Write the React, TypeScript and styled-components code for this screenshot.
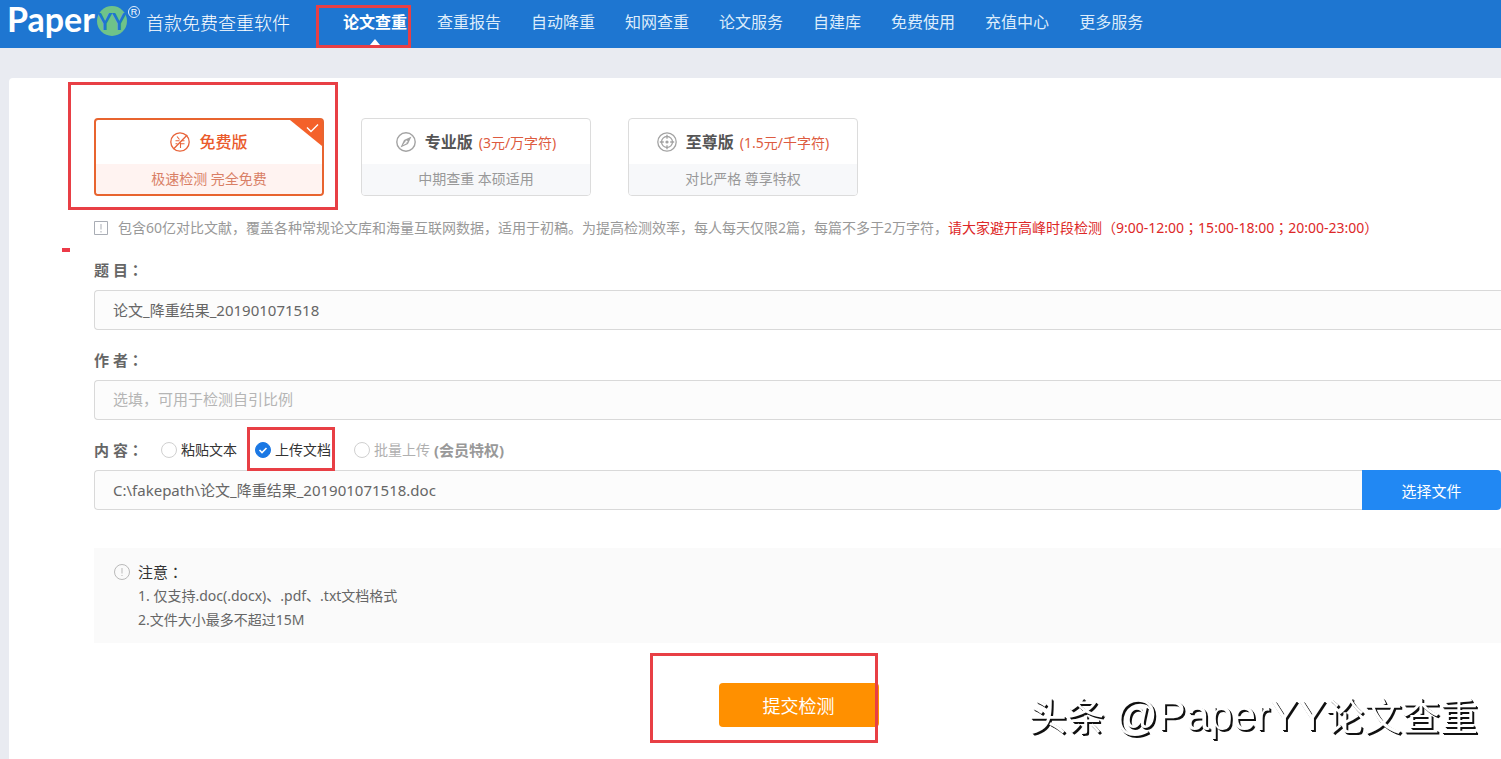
import React from 'react';
import styled, { createGlobalStyle, css } from 'styled-components';

const Global = createGlobalStyle`
  *, *::before, *::after { box-sizing: border-box; }
  body {
    margin: 0;
    background: #e9ebf1;
    font-family: "Noto Sans", "Noto Sans CJK SC", sans-serif;
    font-size: 14px;
    color: #666;
    overflow-x: hidden;
  }
  button, input { font: inherit; }
`;

const Header = styled.header`
  display: flex;
  height: 48px;
  padding-left: 4px;
  background: #1e76d1;
  color: #fff;
`;

const Brand = styled.a`
  display: flex;
  align-items: flex-start;
  width: 324px;
  flex: none;
  color: #fff;
  text-decoration: none;
`;

const Slogan = styled.span`
  font-family: "Noto Sans CJK SC", sans-serif;
  font-weight: 300;
  font-size: 18px;
  line-height: 44px;
  white-space: nowrap;
`;

const Nav = styled.nav`
  display: flex;
`;

const NavLink = styled.a<{ $active?: boolean }>`
  position: relative;
  padding: 0 15px;
  font-size: 16px;
  line-height: 44px;
  white-space: nowrap;
  text-decoration: none;
  color: ${(p) => (p.$active ? '#fff' : '#dcecfb')};
  font-weight: ${(p) => (p.$active ? 700 : 400)};
  ${(p) =>
    p.$active &&
    css`
      &::after {
        content: '';
        position: absolute;
        left: 42px;
        bottom: 3px;
        border: 5px solid transparent;
        border-top: 0;
        border-bottom: 6px solid #fff;
      }
    `}
`;

const Mark = styled.span<{ $t: number; $r: number; $b: number; $l: number }>`
  position: absolute;
  z-index: 2;
  top: ${(p) => p.$t}px;
  right: ${(p) => p.$r}px;
  bottom: ${(p) => p.$b}px;
  left: ${(p) => p.$l}px;
  border: 3px solid #e83f45;
  pointer-events: none;
`;

const Dash = styled.span`
  position: absolute;
  left: -32px;
  top: 30px;
  width: 8px;
  height: 4px;
  background: #ec3a48;
`;

const Panel = styled.main`
  margin: 30px 0 0 9px;
  padding: 40px 0 32px 85px;
  min-height: calc(100vh - 78px);
  background: #fff;
  border-radius: 4px 0 0 0;
`;

const Plans = styled.div`
  display: flex;
  gap: 37px;
`;

const Plan = styled.button<{ $active?: boolean }>`
  position: relative;
  display: flex;
  flex-direction: column;
  width: 230px;
  height: 78px;
  padding: 0;
  border: ${(p) => (p.$active ? '2px solid #e8642f' : '1px solid #dcdcdc')};
  border-radius: 4px;
  background: #fff;
  cursor: pointer;
`;

const PlanTop = styled.span`
  display: flex;
  flex: 1;
  width: 100%;
  align-items: center;
  justify-content: center;
`;

const PlanName = styled.strong<{ $active?: boolean }>`
  margin: 0 6px 0 9px;
  font-size: 16px;
  font-weight: ${(p) => (p.$active ? 500 : 700)};
  line-height: 24px;
  color: ${(p) => (p.$active ? '#ea5b2c' : '#555')};
  &:last-child { margin-right: 0; }
`;

const Price = styled.span`
  font-size: 14px;
  color: #dd5b40;
`;

const PlanNote = styled.span<{ $active?: boolean }>`
  width: 100%;
  font-size: 14px;
  line-height: 30px;
  border-radius: 0 0 3px 3px;
  padding-bottom: ${(p) => (p.$active ? 0 : 1)}px;
  background: ${(p) => (p.$active ? '#fff3f1' : '#f7f8fa')};
  color: ${(p) => (p.$active ? '#d97f66' : '#999')};
`;

const Corner = styled.svg`
  position: absolute;
  top: 0;
  right: 0;
`;

const Tip = styled.p`
  position: relative;
  display: flex;
  align-items: center;
  gap: 10px;
  margin: 22px 0;
  line-height: 20px;
  white-space: nowrap;
  color: #999;
`;

const Warn = styled.span`
  color: #dd2727;
`;

/* Full-width colons and semicolons sit in the middle of their cell. */
const MidPunct = styled.span`
  font-family: "Noto Sans CJK JP", sans-serif;
  line-height: 1;
`;

const Row = styled.div`
  margin-bottom: 20px;
`;

const Label = styled.label`
  display: block;
  font-size: 15px;
  font-weight: 700;
  line-height: 20px;
  margin-bottom: 10px;
  color: #666;
`;

const TextBox = styled.input`
  display: block;
  flex: 1;
  width: 100%;
  min-width: 0;
  height: 40px;
  padding: 0 18px 2px;
  border: 1px solid #d9d9d9;
  border-right: 0;
  border-radius: 4px 0 0 4px;
  background: #fcfcfc;
  font-size: 15px;
  color: #666;
  outline: 0;
  &::placeholder { color: #b5b5b5; opacity: 1; }
`;

const Modes = styled.fieldset`
  display: flex;
  align-items: center;
  height: 20px;
  margin: 0 0 10px;
  padding: 0;
  border: 0;
`;

const ModesTitle = styled.span`
  width: 67px;
  font-size: 15px;
  font-weight: 700;
  line-height: 20px;
`;

const Mode = styled.label<{ $off?: boolean }>`
  position: relative;
  display: flex;
  align-items: center;
  gap: 4px;
  margin-right: 18px;
  line-height: 20px;
  white-space: nowrap;
  color: ${(p) => (p.$off ? '#b0b0b0' : '#333')};
  b { font-size: 15px; color: #999; }
  & + & + & { margin-left: 5px; }
`;

const Radio = styled.input`
  appearance: none;
  flex: none;
  width: 16px;
  height: 16px;
  margin: 0;
  border: 1px solid #d0d0d0;
  border-radius: 50%;
  background: #fff;
  &:checked {
    border-color: #1b78e4;
    background: #1b78e4;
  }
`;

const RadioTick = styled.svg`
  position: absolute;
  left: 3px;
  top: 5px;
`;

const FileRow = styled.div`
  display: flex;
`;

const Pick = styled.button`
  width: 139px;
  flex: none;
  border: 0;
  border-radius: 0 4px 4px 0;
  background: #2188f3;
  color: #fff;
  font-size: 15px;
`;

const Notice = styled.section`
  display: flex;
  gap: 8px;
  margin-top: 38px;
  padding: 12px 20px 11px;
  background: #fafafa;
  line-height: 24px;
  svg { flex: none; margin-top: 4px; }
`;

const NoticeTitle = styled.h2`
  margin: 0;
  font-size: 15px;
  font-weight: 400;
  line-height: 24px;
  color: #333;
`;

const NoticeLine = styled.p`
  margin: 0;
`;

const SubmitRow = styled.div`
  display: flex;
  justify-content: center;
  margin-top: 40px;
  padding-left: 2px;
`;

const SubmitWrap = styled.div`
  position: relative;
`;

const Submit = styled.button`
  display: block;
  width: 160px;
  height: 44px;
  border: 0;
  border-radius: 4px;
  background: #ff9000;
  color: #fff;
  font-size: 18px;
`;

const Watermark = styled.div`
  position: fixed;
  right: 23px;
  bottom: 14px;
  font-family: "Liberation Sans", "Noto Sans CJK SC", sans-serif;
  font-size: 38px;
  line-height: 56px;
  white-space: nowrap;
  color: #fff;
  text-shadow: 1px 1px 0 #111, 2px 2px 0 #111;
  pointer-events: none;
`;

const Handle = styled.span`
  font-size: 42px;
`;

const LogoArt = styled.svg`
  flex: none;
  overflow: visible;
`;

const Logo = () => (
  <LogoArt width="142" height="48" viewBox="0 0 142 48" role="img" aria-label="PaperYY">
    <text x="3" y="32" fontFamily="Lato, sans-serif" fontWeight="700" fontSize="34" fill="#fff">Paper</text>
    <circle cx="108" cy="21" r="15" fill="#6fc389" />
    <text x="108" y="30" textAnchor="middle" fontFamily="Lato, sans-serif" fontWeight="700" fontSize="22" fill="#1e76d1">YY</text>
    <circle cx="130" cy="12" r="5.5" fill="none" stroke="#e4f1fd" />
    <text x="130" y="15" textAnchor="middle" fontFamily="Liberation Sans, sans-serif" fontSize="9" fill="#fff">R</text>
  </LogoArt>
);

const FreeIcon = () => (
  <svg width="20" height="20" viewBox="0 0 20 20" fill="none" stroke="#e8643a" strokeWidth="1.3">
    <circle cx="10" cy="10" r="9.2" />
    <path d="M17.200 3 3.500 17" />
    <path d="M7 4.500 9.500 7.500M5.500 8.700h4M11 8.700h3.500M10.500 11.700h4M5.500 11.700h2M10.500 10.500v5.500" strokeWidth="1.1" />
  </svg>
);

const CompassIcon = () => (
  <svg width="20" height="20" viewBox="0 0 20 20" fill="none" stroke="#a3a3a3" strokeWidth="1.4">
    <circle cx="10" cy="10" r="9.200" />
    <path d="M15.500 4.500 8 8 4.500 15.500 12 12Z" fill="#a3a3a3" stroke="none" />
    <path d="M9.200 9.800 11 11 6.800 13.200Z" fill="#fff" stroke="none" />
    <circle cx="10.500" cy="9.500" r="1.100" fill="#fff" stroke="none" />
  </svg>
);

const TargetIcon = () => (
  <svg width="20" height="20" viewBox="0 0 20 20" fill="none" stroke="#a3a3a3" strokeWidth="1.3">
    <circle cx="10" cy="10" r="9.200" />
    <circle cx="10" cy="10" r="5.500" />
    <circle cx="10" cy="10" r="1.600" fill="#a3a3a3" stroke="none" />
    <path d="M10 2.800v4M10 13.200v4M2.800 10h4M13.200 10h4" />
  </svg>
);

const links = ['查重报告', '自动降重', '知网查重', '论文服务', '自建库', '免费使用', '充值中心', '更多服务'];
const peakHours = ['9:00-12:00', '15:00-18:00', '20:00-23:00'];

export default function App() {
  return (
    <>
      <Global />
      <Header>
        <Brand href="#">
          <Logo />
          <Slogan>首款免费查重软件</Slogan>
        </Brand>
        <Nav>
          <NavLink href="#" $active>
            论文查重
            <Mark $t={5} $r={11} $b={0} $l={-12} />
          </NavLink>
          {links.map((t) => (
            <NavLink href="#" key={t}>{t}</NavLink>
          ))}
        </Nav>
      </Header>
      <Panel>
        <Plans>
          <Plan type="button" $active>
            <PlanTop>
              <FreeIcon />
              <PlanName $active>免费版</PlanName>
            </PlanTop>
            <PlanNote $active>极速检测 完全免费</PlanNote>
            <Corner width="32" height="27" viewBox="0 0 32 27">
              <path d="M0 0H32V26Z" fill="#f4612a" />
              <path d="m17 7.500 4 4 7-7" fill="none" stroke="#fff" strokeWidth="1.4" />
            </Corner>
            <Mark $t={-38} $r={-16} $b={-16} $l={-28} />
          </Plan>
          <Plan type="button">
            <PlanTop>
              <CompassIcon />
              <PlanName>专业版</PlanName>
              <Price>(3元/万字符)</Price>
            </PlanTop>
            <PlanNote>中期查重 本硕适用</PlanNote>
          </Plan>
          <Plan type="button">
            <PlanTop>
              <TargetIcon />
              <PlanName>至尊版</PlanName>
              <Price>(1.5元/千字符)</Price>
            </PlanTop>
            <PlanNote>对比严格 尊享特权</PlanNote>
          </Plan>
        </Plans>
        <Tip>
          <svg width="14" height="14" viewBox="0 0 14 14" fill="none" stroke="#a9adb5">
            <path d="M.5.5h13v13H.5ZM7 3v5.500M7 10v1.500" />
          </svg>
          <span>
            包含60亿对比文献，覆盖各种常规论文库和海量互联网数据，适用于初稿。为提高检测效率，每人每天仅限2篇，每篇不多于2万字符，
            <Warn>
              请大家避开高峰时段检测（
              {peakHours.map((h, i) => (
                <React.Fragment key={h}>
                  {i > 0 && <MidPunct>；</MidPunct>}
                  {h}
                </React.Fragment>
              ))}
              ）
            </Warn>
          </span>
          <Dash />
        </Tip>
        <Row>
          <Label htmlFor="title">题 目<MidPunct>：</MidPunct></Label>
          <TextBox id="title" defaultValue="论文_降重结果_201901071518" />
        </Row>
        <Row>
          <Label htmlFor="author">作 者<MidPunct>：</MidPunct></Label>
          <TextBox id="author" placeholder="选填，可用于检测自引比例" />
        </Row>
        <Modes aria-label="内容">
          <ModesTitle>内 容<MidPunct>：</MidPunct></ModesTitle>
          <Mode>
            <Radio type="radio" name="mode" />
            粘贴文本
          </Mode>
          <Mode>
            <Radio type="radio" name="mode" defaultChecked />
            <RadioTick width="10" height="10" viewBox="0 0 10 10" fill="none" stroke="#fff" strokeWidth="1.6">
              <path d="m1.500 5 2.500 2.500L8.500 3" />
            </RadioTick>
            上传文档
            <Mark $t={-13} $r={-4} $b={-11} $l={-8} />
          </Mode>
          <Mode $off>
            <Radio type="radio" name="mode" disabled />
            批量上传 <b>(会员特权)</b>
          </Mode>
        </Modes>
        <FileRow>
          <TextBox aria-label="文件" readOnly defaultValue="C:\fakepath\论文_降重结果_201901071518.doc" />
          <Pick type="button">选择文件</Pick>
        </FileRow>
        <Notice>
          <svg width="16" height="16" viewBox="0 0 16 16" fill="none" stroke="#b9b9b9">
            <circle cx="8" cy="8" r="7.500" />
            <path d="M8 4v5.500M8 11v1" />
          </svg>
          <div>
            <NoticeTitle>注意<MidPunct>：</MidPunct></NoticeTitle>
            <NoticeLine>1. 仅支持.doc(.docx)、.pdf、.txt文档格式</NoticeLine>
            <NoticeLine>2.文件大小最多不超过15M</NoticeLine>
          </div>
        </Notice>
        <SubmitRow>
          <SubmitWrap>
            <Submit type="submit">提交检测</Submit>
            <Mark $t={-30} $r={1} $b={-16} $l={-69} />
          </SubmitWrap>
        </SubmitRow>
      </Panel>
      <Watermark>
        头条 <Handle>@PaperYY</Handle>论文查重
      </Watermark>
    </>
  );
}
